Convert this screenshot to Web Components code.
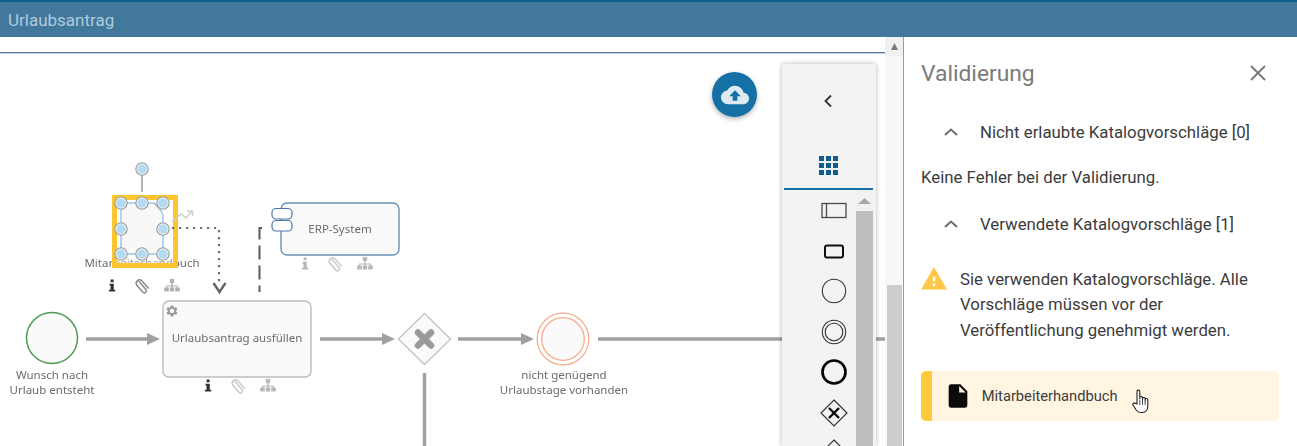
<!DOCTYPE html>
<html lang="de">
<head>
<meta charset="utf-8">
<title>Urlaubsantrag</title>
<style>
  html, body { margin: 0; height: 100%; overflow: hidden; background: #fff; font-family: Roboto, "Liberation Sans", sans-serif; }
  .app { display: flex; flex-direction: column; height: 446px; }
  .main { display: flex; flex: 1; min-height: 0; }
</style>
</head>
<body>
<div class="app">
  <title-bar>Urlaubsantrag</title-bar>
  <div class="main">
    <bpmn-canvas></bpmn-canvas>
    <page-scrollbar></page-scrollbar>
    <validation-panel></validation-panel>
  </div>
</div>

<script>
// Titelleiste oben
class TitleBar extends HTMLElement {
  constructor() {
    super()
    this.attachShadow({ mode: "open" })
    this.shadowRoot.innerHTML = `
      <style>
        :host {
          display: flex;
          align-items: center;
          box-sizing: border-box;
          height: 37px;
          padding: 0 8px;
          background: #41789c;
          border-top: 2px solid #0f5e90;
          color: #afcadb;
          font-size: 17px;
        }
      </style>
      <slot></slot>
    `
  }
}

// Diagramm mit Werkzeugleiste und Upload-Button
class BpmnCanvas extends HTMLElement {
  constructor() {
    super()
    this.attachShadow({ mode: "open" })
    const icons = (x, y, op1, op2, op3) => `
      <use href="#i-info" x="${x - 4}" y="${y - 6}" opacity="${op1}"/>
      <use href="#i-clip" x="${x + 23}" y="${y - 6}" opacity="${op2}"/>
      <use href="#i-tree" x="${x + 52}" y="${y - 6}" opacity="${op3}"/>`
    const handle = (x, y) => `<circle cx="${x}" cy="${y}" r="6.200" fill="#e6f2f9" stroke="#9a9a9a" stroke-width="1.100"/><circle cx="${x}" cy="${y}" r="4.600" fill="#b3daf0"/>`
    const arrow = (x1, x2) => `
      <line x1="${x1}" y1="339" x2="${x2 - 12}" y2="339" stroke="#a0a0a0" stroke-width="3.400"/>
      <path d="M${x2 - 13} 333 L${x2} 339 L${x2 - 13} 345 Z" fill="#a0a0a0"/>`
    this.shadowRoot.innerHTML = `
      <style>
        :host {
          display: block;
          position: relative;
          flex: 0 0 885px;
          overflow: hidden;
          background: #fff;
        }
        .rule { height: 1px; margin-top: 15px; background: #5a7a9c; box-shadow: 0 1px 0 #c3cedb; }
        svg.diagram { position: absolute; left: 0; top: 0; filter: blur(0.3px); }
        text { font-family: "Noto Sans", "Open Sans", sans-serif; font-size: 11.500px; fill: #6b6b6b; text-anchor: middle; }
        .fab {
          position: absolute;
          left: 712px;
          top: 35px;
          width: 45px;
          height: 45px;
          display: flex;
          align-items: center;
          justify-content: center;
          border-radius: 50%;
          background: #1570a6;
          box-shadow: 0 2px 5px rgba(0,0,0,.3);
        }
        tool-palette { position: absolute; left: 782px; top: 27px; bottom: 0; width: 94px; }
      </style>
      <div class="rule"></div>
      <svg class="diagram" width="885" height="409" viewBox="0 37 885 409">
        <defs>
          <g id="i-info"><path d="M2.600 .5h3v2.800h-3z M1.500 4.800h4.300v6h1.500v1.700H.9v-1.700h1.600V6.500h-1z" fill="#333"/></g>
          <g id="i-clip"><path d="M3 3.500l7.500 8.500a2.200 2.200 0 0 1-3.200 3L.9 7.600a3.600 3.600 0 0 1 5-5l7.500 8.400" transform="translate(1 -1) scale(.95)" fill="none" stroke="#8a8a8a" stroke-width="1.600"/></g>
          <g id="i-tree" fill="#a8a8a8"><path d="M5.800 0h4.400v4H8.700v2.400h5.300v2.200h1.800v4h-4.600v-4h1.700V7.500H8.700v1.100h1.500v4H5.800v-4h1.500V7.500H3.100v1.100h1.700v4H.2v-4H2V6.400h5.300V4H5.800z"/></g>
        </defs>

        <!-- Mitarbeiterhandbuch, markiert -->
        <text x="142" y="267">Mitarbeiterhandbuch</text>
        <rect x="114.500" y="197.500" width="61" height="68" fill="rgba(255,255,255,.35)" stroke="#fdc62f" stroke-width="5"/>
        <path d="M121 203 H152 Q155 203 157 206 L161 211 Q163 213 163 216 V254 H121 Z" fill="#f8f8f8" stroke="#94c9e7" stroke-width="1.500"/>
        <line x1="142" y1="175" x2="142" y2="192" stroke="#808080" stroke-width="1.200"/>
        ${handle(142, 169)}
        ${handle(121, 203)}${handle(142, 203)}${handle(163, 203)}
        ${handle(121, 229)}${handle(163, 229)}
        ${handle(121, 254)}${handle(142, 254)}${handle(163, 254)}
        <path d="M172 222 L181 214 L186 218 L192 211 M187 211 H192.500 V216" fill="none" stroke="#cfcfcf" stroke-width="1.600"/>
        ${icons(112, 285, 1, 1, .9)}
        <path d="M172 228 H219 V283" fill="none" stroke="#6f6f6f" stroke-width="2.200" stroke-dasharray="2.200 4.800"/>
        <path d="M213.500 283 L219.500 292 L225.500 283" fill="none" stroke="#666" stroke-width="2.400"/>

        <!-- ERP-System -->
        <path d="M262 228 H259.500 V292" fill="none" stroke="#5a5a5a" stroke-width="2" stroke-dasharray="14 6"/>
        <rect x="281" y="203" width="118" height="52" rx="6" fill="#fafafa" stroke="#6a90b8" stroke-width="1.400"/>
        <rect x="272" y="208.500" width="20" height="10.500" rx="4" fill="#fff" stroke="#4a78a8" stroke-width="1.200"/>
        <rect x="272" y="220.500" width="20" height="10.500" rx="4" fill="#fff" stroke="#4a78a8" stroke-width="1.200"/>
        <text x="340" y="233">ERP-System</text>
        ${icons(305, 263, .35, .45, .8)}

        <!-- Start -->
        <circle cx="52" cy="338" r="25.500" fill="#fafafa" stroke="#4e9a50" stroke-width="1.500"/>
        <text x="52" y="379">Wunsch nach</text>
        <text x="52" y="394">Urlaub entsteht</text>
        ${arrow(86, 160)}

        <!-- Aufgabe -->
        <rect x="163" y="301" width="148" height="76" rx="6" fill="#fafafa" stroke="#bdbdbd" stroke-width="1.400"/>
        <path transform="translate(165 304) scale(.58)" fill="#9c9c9c" d="M19.140 12.940c.04-.3.06-.61.06-.94 0-.32-.02-.64-.07-.94l2.030-1.580c.18-.14.23-.41.12-.61l-1.920-3.320c-.12-.22-.37-.29-.59-.22l-2.390.96c-.5-.38-1.030-.7-1.620-.94l-.36-2.540c-.04-.24-.24-.41-.48-.41h-3.840c-.24 0-.43.17-.47.41l-.36 2.540c-.59.24-1.130.57-1.620.94l-2.390-.96c-.22-.08-.47 0-.59.22L2.740 8.870c-.12.21-.08.47.12.61l2.030 1.580c-.05.3-.09.63-.09.94s.02.64.07.94l-2.030 1.580c-.18.14-.23.41-.12.61l1.920 3.320c.12.22.37.29.59.22l2.390-.96c.5.38 1.030.7 1.620.94l.36 2.540c.05.24.24.41.48.41h3.840c.24 0 .44-.17.47-.41l.36-2.540c.59-.24 1.130-.56 1.620-.94l2.390.96c.22.08.47 0 .59-.22l1.920-3.320c.12-.22.07-.47-.12-.61l-2.010-1.580zM12 15.600c-1.980 0-3.600-1.620-3.600-3.600s1.620-3.600 3.600-3.600 3.600 1.620 3.600 3.600-1.620 3.600-3.600 3.600z"/>
        <text x="237" y="342">Urlaubsantrag ausfüllen</text>
        ${icons(208, 385, 1, .45, .8)}
        ${arrow(320, 395)}

        <!-- Gateway -->
        <path d="M424.500 313.500 L450.500 339 L424.500 364.500 L398.500 339 Z" fill="#fafafa" stroke="#c6c6c6" stroke-width="1.500"/>
        <path d="M418 332.500 L431 345.500 M431 332.500 L418 345.500" stroke="#9a9a9a" stroke-width="6.500" stroke-linecap="round"/>
        <line x1="424.500" y1="373" x2="424.500" y2="446" stroke="#a0a0a0" stroke-width="3.400"/>
        ${arrow(458, 534)}

        <!-- Ende -->
        <circle cx="563" cy="339" r="25.800" fill="#fff" stroke="#f6ad8e" stroke-width="1.300"/>
        <circle cx="563" cy="339" r="21.300" fill="#fafafa" stroke="#f6ad8e" stroke-width="1.300"/>
        <text x="564" y="379">nicht genügend</text>
        <text x="564" y="394">Urlaubstage vorhanden</text>
        <line x1="598" y1="339" x2="885" y2="339" stroke="#a0a0a0" stroke-width="3.400"/>
      </svg>
      <div class="fab">
        <svg width="28" height="28" viewBox="0 0 24 24"><path fill="#deeaf2" d="M19.350 10.040C18.670 6.590 15.640 4 12 4 9.110 4 6.600 5.640 5.350 8.040 2.340 8.360 0 10.910 0 14c0 3.310 2.690 6 6 6h13c2.760 0 5-2.240 5-5 0-2.640-2.050-4.780-4.650-4.960zM14 13v4h-4v-4H7l5-5 5 5h-3z"/></svg>
      </div>
      <tool-palette></tool-palette>
    `
  }
}

// Werkzeugleiste rechts im Diagramm
class ToolPalette extends HTMLElement {
  constructor() {
    super()
    this.attachShadow({ mode: "open" })
    const squares = []
    for (let y = 0; y < 3; y++) {
      for (let x = 0; x < 3; x++) {
        squares.push(`<rect x="${x * 7}" y="${y * 7}" width="5" height="5"/>`)
      }
    }
    this.shadowRoot.innerHTML = `
      <style>
        :host {
          display: flex;
          flex-direction: column;
          box-sizing: border-box;
          background: #f3f3f3;
          box-shadow: 0 0 5px rgba(0,0,0,.3);
          border-radius: 2px 2px 0 0;
          overflow: hidden;
        }
        .back { display: flex; justify-content: center; align-items: center; height: 73px; }
        .back svg { margin-right: 2px; }
        .tab { display: flex; justify-content: center; align-items: flex-end; height: 38px; padding-bottom: 13px; margin: 0 3px 0 2px; border-bottom: 2px solid #1570a6; }
        .body { display: flex; flex: 1; min-height: 0; margin-right: 3px; }
        .items { flex: 1; display: flex; flex-direction: column; align-items: flex-end; padding: 0 7.500px 0 0; }
        .scroll { width: 18px; flex: none; background: #f1f1f1; display: flex; flex-direction: column; align-items: center; }
        .up { height: 21px; display: flex; align-items: center; justify-content: center; }
        .thumb { flex: 1; width: 17px; background: #bebebe; }
      </style>
      <div class="back">
        <svg width="12" height="14" viewBox="0 0 12 14"><path d="M9 1.500 L3.500 7 L9 12.500" fill="none" stroke="#333" stroke-width="1.800"/></svg>
      </div>
      <div class="tab">
        <svg width="19" height="19" viewBox="0 0 19 19" fill="#0f5e90">${squares.join("")}</svg>
      </div>
      <div class="body">
        <div class="items">
          <palette-tool kind="pool"></palette-tool>
          <palette-tool kind="task"></palette-tool>
          <palette-tool kind="start"></palette-tool>
          <palette-tool kind="inter"></palette-tool>
          <palette-tool kind="end"></palette-tool>
          <palette-tool kind="xor"></palette-tool>
          <palette-tool kind="gate"></palette-tool>
        </div>
        <div class="scroll">
          <div class="up"><svg width="13" height="6" viewBox="0 0 13 6"><path d="M6.500 0 L13 6 H0 Z" fill="#a8a8a8"/></svg></div>
          <div class="thumb"></div>
        </div>
      </div>
    `
  }
}

// Einzelnes Symbol in der Werkzeugleiste
class PaletteTool extends HTMLElement {
  connectedCallback() {
    if (this.shadowRoot) return
    this.attachShadow({ mode: "open" })
    const shapes = {
      pool: `<rect x="1" y="13.500" width="24" height="14" fill="none" stroke="#4a4a4a" stroke-width="1.300"/><line x1="5.500" y1="13.500" x2="5.500" y2="27.500" stroke="#4a4a4a" stroke-width="1.300"/>`,
      task: `<rect x="4" y="14.500" width="18" height="12" rx="2" fill="none" stroke="#111" stroke-width="2"/>`,
      start: `<circle cx="13" cy="20" r="11.700" fill="none" stroke="#333" stroke-width="1.100"/>`,
      inter: `<circle cx="13" cy="20" r="11.700" fill="none" stroke="#333" stroke-width="1.100"/><circle cx="13" cy="20" r="8.800" fill="none" stroke="#333" stroke-width="1.100"/>`,
      end: `<circle cx="13" cy="20" r="11.500" fill="none" stroke="#050505" stroke-width="2.700"/>`,
      xor: `<path d="M13 7 L26 20 L13 33 L0 20 Z" fill="none" stroke="#333" stroke-width="1.200"/><path d="M8 15 L18 25 M18 15 L8 25" stroke="#050505" stroke-width="2.300"/>`,
      gate: `<path d="M13 7 L26 20 L13 33 L0 20 Z" fill="none" stroke="#333" stroke-width="1.200"/>`
    }
    this.shadowRoot.innerHTML = `
      <style>
        :host { display: block; width: 27px; height: 40.500px; flex: none; }
        svg { display: block; overflow: visible; }
      </style>
      <svg width="26" height="40" viewBox="0 0 26 40">${shapes[this.getAttribute("kind")]}</svg>
    `
  }
}

// Scrollleiste zwischen Diagramm und Seitenleiste
class PageScrollbar extends HTMLElement {
  constructor() {
    super()
    this.attachShadow({ mode: "open" })
    this.shadowRoot.innerHTML = `
      <style>
        :host {
          display: flex;
          flex-direction: column;
          flex: 0 0 19px;
          box-sizing: border-box;
          background: #f7f7f7;
          border-right: 1px solid #9a9a9a;
        }
        .up { height: 19px; display: flex; align-items: center; justify-content: center; background: #f1f1f1; }
        .track { flex: 1; display: flex; flex-direction: column; justify-content: flex-end; padding: 0 1px 0 2px; }
        .thumb { height: 161px; background: #cdcdcd; }
      </style>
      <div class="up"><svg width="7" height="7" viewBox="0 0 7 7"><path d="M3.500 0 L7 7 H0 Z" fill="#7a7a7a"/></svg></div>
      <div class="track"><div class="thumb"></div></div>
    `
  }
}

// Aufklappbare Zeile mit Pfeil
class AccordionRow extends HTMLElement {
  constructor() {
    super()
    this.attachShadow({ mode: "open" })
    this.shadowRoot.innerHTML = `
      <style>
        :host {
          display: flex;
          align-items: center;
          height: 46px;
          padding-left: 23px;
          gap: 22px;
          color: #3c3c3c;
          font-size: 16.800px;
        }
        svg { flex: none; }
      </style>
      <svg width="14" height="8" viewBox="0 0 14 8"><path d="M1 7 L7 1.500 L13 7" fill="none" stroke="#6e6e6e" stroke-width="2"/></svg>
      <span><slot></slot></span>
    `
  }
}

// Eintrag eines Katalogvorschlags
class CatalogCard extends HTMLElement {
  constructor() {
    super()
    this.attachShadow({ mode: "open" })
    this.shadowRoot.innerHTML = `
      <style>
        :host {
          display: flex;
          align-items: center;
          position: relative;
          box-sizing: border-box;
          height: 50px;
          padding-left: 11.700px;
          background: #fff5e0;
          border-left: 11px solid #ffca38;
          border-radius: 5px;
          color: #3c3c3c;
          font-size: 14.700px;
        }
        .doc { flex: none; margin-right: 10px; }
        .hand { position: absolute; left: 200px; top: 18px; }
      </style>
      <svg class="doc" width="28" height="28" viewBox="0 0 24 24"><path fill="#0b0b0b" d="M14 2H6c-1.100 0-2 .9-2 2v16c0 1.100.9 2 2 2h12c1.100 0 2-.9 2-2V8l-6-6zm-1 7V3.500L18.500 9H13z"/></svg>
      <span><slot></slot></span>
      <svg class="hand" width="18" height="25" viewBox="0 0 18 25">
        <path d="M5 15 V2.500 a1.400 1.400 0 0 1 2.800 0 V10 V8.500 a1.400 1.400 0 0 1 2.700 0 V11 V9.500 a1.400 1.400 0 0 1 2.700 0 V12 V10.800 a1.300 1.300 0 0 1 2.600 0 V17 c0 3.500-2 6.500-5.500 6.500 H8.500 c-2 0-3.200-1-4.300-2.500 L1 16 c-.8-1.300 1.200-3 2.500-1.500 z" fill="#fff" stroke="#222" stroke-width="1.100" stroke-linejoin="round"/>
        <path d="M7.800 11 V16 M10.500 11 V16 M13.200 12 V16" stroke="#222" stroke-width=".8"/>
      </svg>
    `
  }
}

// Seitenleiste Validierung
class ValidationPanel extends HTMLElement {
  constructor() {
    super()
    this.attachShadow({ mode: "open" })
    this.shadowRoot.innerHTML = `
      <style>
        :host {
          display: block;
          flex: 1;
          box-sizing: border-box;
          padding: 0 18px 0 17px;
          background: #fff;
          color: #3c3c3c;
          font-size: 16.800px;
          overflow: hidden;
        }
        header { display: flex; align-items: center; justify-content: space-between; height: 72px; }
        h2 { margin: 0; font-size: 22.800px; font-weight: 400; color: #7b7b7b; }
        .close { margin-right: 12px; }
        .empty { margin: 0 0 2px; line-height: 44px; }
        .notice { display: flex; gap: 13px; margin: 20px 0 28px; line-height: 25.300px; }
        .notice svg { flex: none; margin-top: 0; }
        .notice p { margin: 0; }
      </style>
      <header>
        <h2>Validierung</h2>
        <svg class="close" width="18" height="18" viewBox="0 0 18 18"><path d="M2 2 L16 16 M16 2 L2 16" stroke="#777" stroke-width="1.800"/></svg>
      </header>
      <accordion-row>Nicht erlaubte Katalogvorschläge [0]</accordion-row>
      <p class="empty">Keine Fehler bei der Validierung.</p>
      <accordion-row>Verwendete Katalogvorschläge [1]</accordion-row>
      <div class="notice">
        <svg width="26" height="26" viewBox="1 2 22 22"><path fill="#fdc84a" d="M1 21h22L12 2 1 21zm12-3h-2v-2h2v2zm0-4h-2v-4h2v4z"/></svg>
        <p>Sie verwenden Katalogvorschläge. Alle Vorschläge müssen vor der Veröffentlichung genehmigt werden.</p>
      </div>
      <catalog-card>Mitarbeiterhandbuch</catalog-card>
    `
  }
}

customElements.define("title-bar", TitleBar)
customElements.define("palette-tool", PaletteTool)
customElements.define("tool-palette", ToolPalette)
customElements.define("bpmn-canvas", BpmnCanvas)
customElements.define("page-scrollbar", PageScrollbar)
customElements.define("accordion-row", AccordionRow)
customElements.define("catalog-card", CatalogCard)
customElements.define("validation-panel", ValidationPanel)
</script>
</body>
</html>
